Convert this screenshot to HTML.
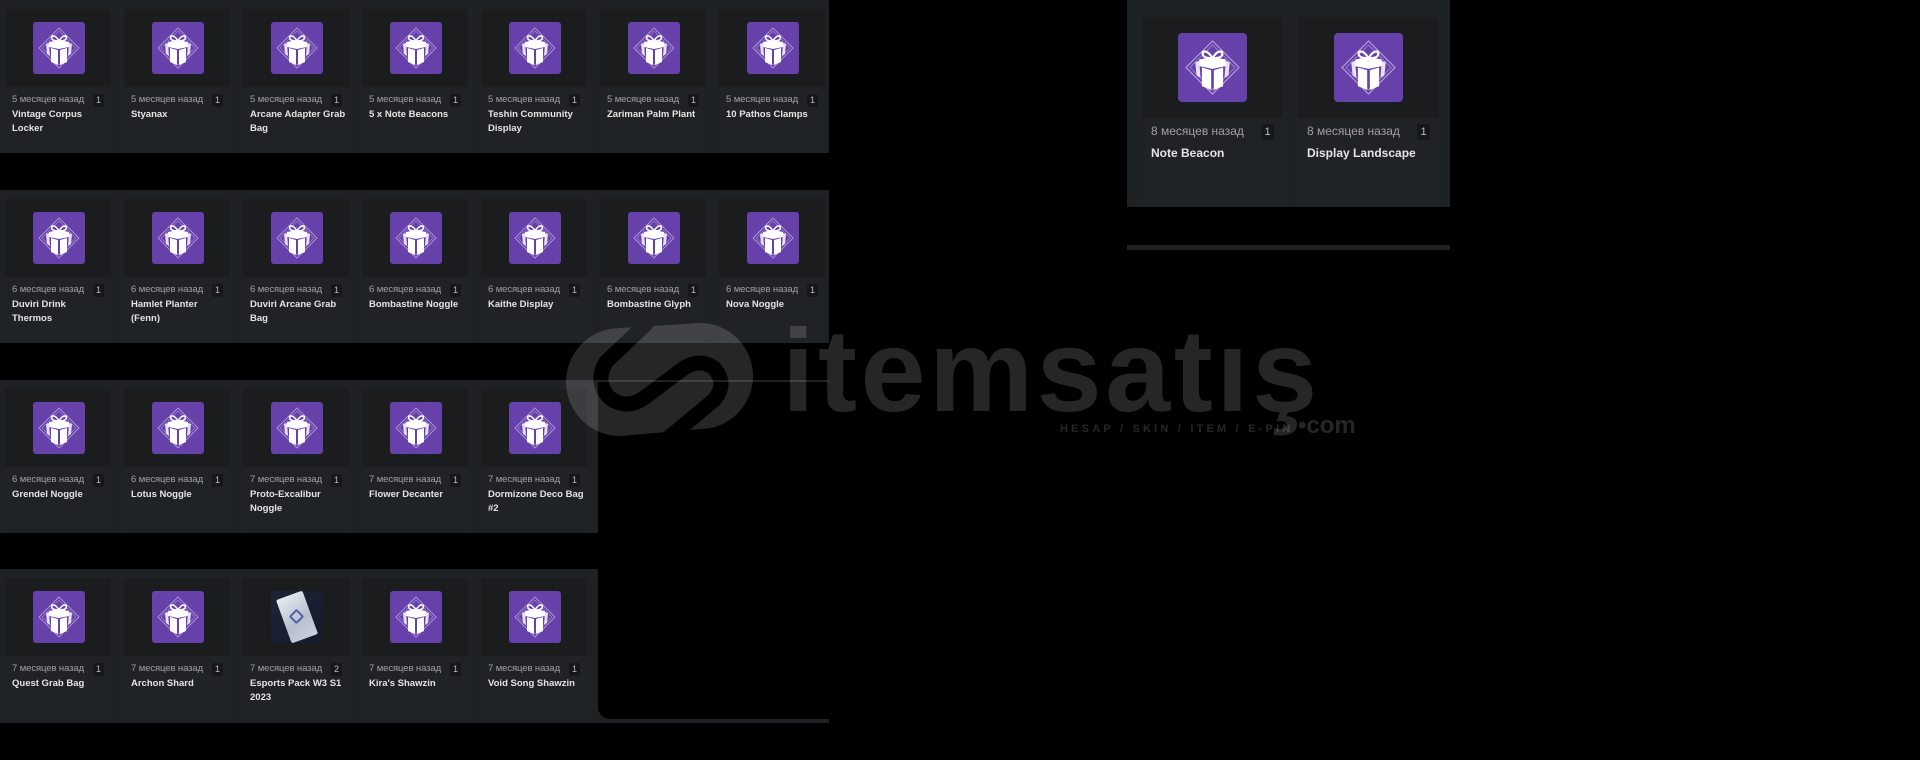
<!DOCTYPE html>
<html><head><meta charset="utf-8">
<style>
*{margin:0;padding:0;box-sizing:border-box}
body{width:1920px;height:760px;background:#000;position:relative;overflow:hidden;font-family:"Liberation Sans",sans-serif}
.panel{position:absolute;background:#1f2225}
.card{position:absolute;width:106px;height:144px;background:#202326}
.card .img{height:78px;background:#1b1c1e;position:relative}
.card .img svg,.card .img .pack{position:absolute;left:28px;top:13px;width:52px;height:52px}
.card .date{position:absolute;left:7px;top:85px;font-size:9.5px;color:#a0a0a0;white-space:nowrap;letter-spacing:-0.1px}
.card .q{position:absolute;right:7px;top:85px;width:11px;height:13px;background:#16171a;border-radius:2px;color:#bbb;font-size:9px;text-align:center;line-height:13px}
.card .t{position:absolute;left:7px;top:99px;width:96px;font-size:9.5px;font-weight:bold;color:#e4e4e4;line-height:13.5px}
.big{position:absolute;width:141px;height:190px;background:#202326}
.big .img{height:101px;background:#1b1c1e;position:relative}
.big .img svg{position:absolute;left:36px;top:16px;width:69px;height:69px}
.big .date{position:absolute;left:9px;top:107px;font-size:12px;color:#a0a0a0;white-space:nowrap}
.big .q{position:absolute;right:9px;top:107px;width:13px;height:16px;background:#16171a;border-radius:2px;color:#bbb;font-size:11px;text-align:center;line-height:16px}
.big .t{position:absolute;left:9px;top:129px;font-size:12px;font-weight:bold;color:#e4e4e4}
.pack{border-radius:3px;background:linear-gradient(135deg,#1d2438,#141a2a);overflow:hidden}
.pack i{position:absolute;left:12px;top:3px;width:28px;height:46px;background:linear-gradient(160deg,#e8ecf2,#b8bfcc 60%,#c9d4e0);transform:rotate(-20deg);border-radius:2px}
.pack b{position:absolute;left:20px;top:20px;width:11px;height:11px;border:2px solid #4a63a8;border-radius:2px;transform:rotate(45deg)}
.wm{position:absolute;color:rgba(255,255,255,0.15)}
</style></head><body>
<svg width="0" height="0" style="position:absolute">
<defs>
<symbol id="g" viewBox="0 0 52 52">
<rect width="52" height="52" rx="3" fill="#6741aa"/>
<path d="M26 6 L46 26 L26 46 L6 26 Z" fill="none" stroke="#b9a3dc" stroke-width="0.8"/>
<path d="M26 9 L43 26 L26 43 L9 26 Z" fill="none" stroke="#a48acf" stroke-width="0.6"/>
<path d="M26 19 C22 12 17 13 19 17 C20 19 24 19 26 19 C28 19 32 19 33 17 C35 13 30 12 26 19Z" fill="none" stroke="#fff" stroke-width="1.6"/>
<path d="M16 20 L26 18 L36 20 L36 25 L26 27 L16 25 Z" fill="#fff"/>
<path d="M18 26 L25 28 L25 43 L18 40 Z" fill="#fff"/>
<path d="M27 28 L34 26 L34 40 L27 43 Z" fill="#fff"/>
<path d="M13 22 L16 21 L17 34 L14 32Z M39 22 L36 21 L35 34 L38 32Z" fill="#e8e0f5"/>
</symbol>
</defs>
</svg>

<div class="panel" style="left:0;top:0;width:829px;height:153px"></div>
<div class="panel" style="left:0;top:190px;width:829px;height:153px"></div>
<div class="panel" style="left:0;top:380px;width:598px;height:153px"></div>
<div class="panel" style="left:598px;top:380px;width:231px;height:2px"></div>
<div class="panel" style="left:0;top:569px;width:598px;height:154px"></div>
<div class="panel" style="left:598px;top:706px;width:231px;height:17px"></div>
<div style="position:absolute;left:598px;top:700px;width:231px;height:19px;background:#000;border-bottom-left-radius:12px"></div>

<div class="panel" style="left:1127px;top:0;width:323px;height:207px"></div>
<div class="panel" style="left:1127px;top:245px;width:323px;height:5px"></div>

<div class="card" style="left:5px;top:9px"><div class="img"><svg><use href="#g"/></svg></div><div class="date">5 месяцев назад</div><div class="q">1</div><div class="t">Vintage Corpus Locker</div></div>
<div class="card" style="left:124px;top:9px"><div class="img"><svg><use href="#g"/></svg></div><div class="date">5 месяцев назад</div><div class="q">1</div><div class="t">Styanax</div></div>
<div class="card" style="left:243px;top:9px"><div class="img"><svg><use href="#g"/></svg></div><div class="date">5 месяцев назад</div><div class="q">1</div><div class="t">Arcane Adapter Grab Bag</div></div>
<div class="card" style="left:362px;top:9px"><div class="img"><svg><use href="#g"/></svg></div><div class="date">5 месяцев назад</div><div class="q">1</div><div class="t">5 x Note Beacons</div></div>
<div class="card" style="left:481px;top:9px"><div class="img"><svg><use href="#g"/></svg></div><div class="date">5 месяцев назад</div><div class="q">1</div><div class="t">Teshin Community Display</div></div>
<div class="card" style="left:600px;top:9px"><div class="img"><svg><use href="#g"/></svg></div><div class="date">5 месяцев назад</div><div class="q">1</div><div class="t">Zariman Palm Plant</div></div>
<div class="card" style="left:719px;top:9px"><div class="img"><svg><use href="#g"/></svg></div><div class="date">5 месяцев назад</div><div class="q">1</div><div class="t">10 Pathos Clamps</div></div>

<div class="card" style="left:5px;top:199px"><div class="img"><svg><use href="#g"/></svg></div><div class="date">6 месяцев назад</div><div class="q">1</div><div class="t">Duviri Drink Thermos</div></div>
<div class="card" style="left:124px;top:199px"><div class="img"><svg><use href="#g"/></svg></div><div class="date">6 месяцев назад</div><div class="q">1</div><div class="t">Hamlet Planter (Fenn)</div></div>
<div class="card" style="left:243px;top:199px"><div class="img"><svg><use href="#g"/></svg></div><div class="date">6 месяцев назад</div><div class="q">1</div><div class="t">Duviri Arcane Grab Bag</div></div>
<div class="card" style="left:362px;top:199px"><div class="img"><svg><use href="#g"/></svg></div><div class="date">6 месяцев назад</div><div class="q">1</div><div class="t">Bombastine Noggle</div></div>
<div class="card" style="left:481px;top:199px"><div class="img"><svg><use href="#g"/></svg></div><div class="date">6 месяцев назад</div><div class="q">1</div><div class="t">Kaithe Display</div></div>
<div class="card" style="left:600px;top:199px"><div class="img"><svg><use href="#g"/></svg></div><div class="date">6 месяцев назад</div><div class="q">1</div><div class="t">Bombastine Glyph</div></div>
<div class="card" style="left:719px;top:199px"><div class="img"><svg><use href="#g"/></svg></div><div class="date">6 месяцев назад</div><div class="q">1</div><div class="t">Nova Noggle</div></div>

<div class="card" style="left:5px;top:389px"><div class="img"><svg><use href="#g"/></svg></div><div class="date">6 месяцев назад</div><div class="q">1</div><div class="t">Grendel Noggle</div></div>
<div class="card" style="left:124px;top:389px"><div class="img"><svg><use href="#g"/></svg></div><div class="date">6 месяцев назад</div><div class="q">1</div><div class="t">Lotus Noggle</div></div>
<div class="card" style="left:243px;top:389px"><div class="img"><svg><use href="#g"/></svg></div><div class="date">7 месяцев назад</div><div class="q">1</div><div class="t">Proto-Excalibur Noggle</div></div>
<div class="card" style="left:362px;top:389px"><div class="img"><svg><use href="#g"/></svg></div><div class="date">7 месяцев назад</div><div class="q">1</div><div class="t">Flower Decanter</div></div>
<div class="card" style="left:481px;top:389px"><div class="img"><svg><use href="#g"/></svg></div><div class="date">7 месяцев назад</div><div class="q">1</div><div class="t">Dormizone Deco Bag #2</div></div>

<div class="card" style="left:5px;top:578px"><div class="img"><svg><use href="#g"/></svg></div><div class="date">7 месяцев назад</div><div class="q">1</div><div class="t">Quest Grab Bag</div></div>
<div class="card" style="left:124px;top:578px"><div class="img"><svg><use href="#g"/></svg></div><div class="date">7 месяцев назад</div><div class="q">1</div><div class="t">Archon Shard</div></div>
<div class="card" style="left:243px;top:578px"><div class="img"><div class="pack"><i></i><b></b></div></div><div class="date">7 месяцев назад</div><div class="q">2</div><div class="t">Esports Pack W3 S1 2023</div></div>
<div class="card" style="left:362px;top:578px"><div class="img"><svg><use href="#g"/></svg></div><div class="date">7 месяцев назад</div><div class="q">1</div><div class="t">Kira's Shawzin</div></div>
<div class="card" style="left:481px;top:578px"><div class="img"><svg><use href="#g"/></svg></div><div class="date">7 месяцев назад</div><div class="q">1</div><div class="t">Void Song Shawzin</div></div>

<div class="big" style="left:1142px;top:17px"><div class="img"><svg><use href="#g"/></svg></div><div class="date">8 месяцев назад</div><div class="q">1</div><div class="t">Note Beacon</div></div>
<div class="big" style="left:1298px;top:17px"><div class="img"><svg><use href="#g"/></svg></div><div class="date">8 месяцев назад</div><div class="q">1</div><div class="t">Display Landscape</div></div>

<svg style="position:absolute;left:0;top:0" width="1920" height="760">
<defs>
<mask id="lm" maskUnits="userSpaceOnUse" x="0" y="0" width="1920" height="760">
<circle cx="620" cy="382" r="54" fill="#fff"/>
<circle cx="700" cy="376" r="53" fill="#fff"/>
<path d="M620 328 L700 323 L700 429 L620 436Z" fill="#fff"/>
<path d="M648 322 L606 362 Q594 382 610 398 Q626 410 644 398 L684 368 Q700 358 714 368 Q728 384 714 400 L666 440" fill="none" stroke="#000" stroke-width="15" stroke-linejoin="round"/>
</mask>
</defs>
<rect x="560" y="315" width="200" height="130" fill="rgba(255,255,255,0.15)" mask="url(#lm)"/>
</svg>
<div class="wm" style="left:782px;top:312px;font-size:117px;font-weight:bold;letter-spacing:3.5px;line-height:117px">itemsatış</div>
<div class="wm" style="left:1060px;top:423px;font-size:11px;letter-spacing:3.2px;font-weight:bold">HESAP / SKIN / ITEM / E-PIN</div>
<div class="wm" style="left:1298px;top:412px;font-size:24px;font-weight:bold">•com</div>
</body></html>
